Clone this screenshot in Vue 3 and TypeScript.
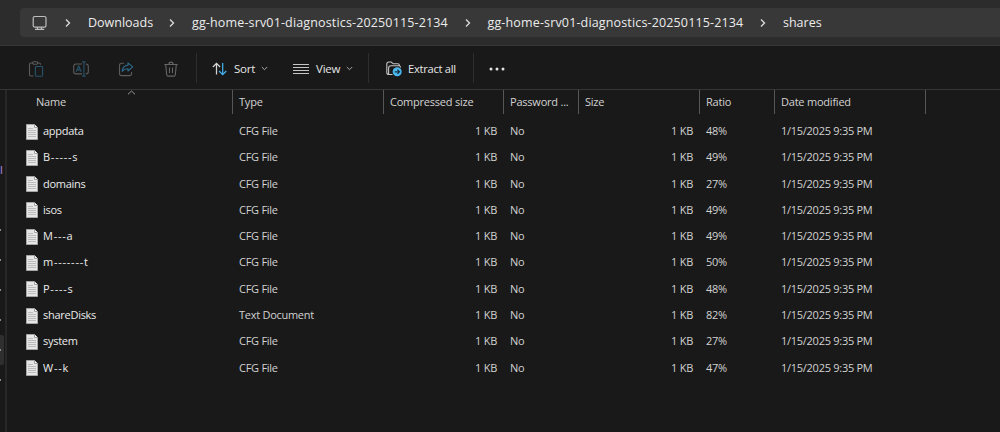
<template>
  <div class="explorer">
    <div class="address">
      <nav class="crumbs">
        <svg class="monitor" width="16" height="16" viewBox="0 0 16 16" fill="none">
          <rect x="1.200" y="1.500" width="12.800" height="10.600" rx="1.600" stroke="#bdbdbd" stroke-width="1.200" />
          <path d="M5.500 12v2.200M9.500 12v2.200M3 14.300h9.200" stroke="#bdbdbd" stroke-width="1.300" />
        </svg>
        <template v-for="(crumb, i) in crumbs" :key="i">
          <svg class="sep" width="6" height="10" viewBox="0 0 6 10" fill="none">
            <path d="M1 1.500 4.500 5 1 8.500" stroke="#d6d6d6" stroke-width="1.400" />
          </svg>
          <span class="crumb" :class="crumb.kind">{{ crumb.label }}</span>
        </template>
      </nav>
    </div>

    <div class="toolbar">
      <svg class="tool paste" width="16" height="16" viewBox="0 0 16 16" fill="none" stroke-width="1.1">
        <path d="M5 2H2.8C2 2 1.5 2.5 1.5 3.2v10.600c0 .7.5 1.200 1.300 1.200H5.500M9.500 2h1.800c.7 0 1.200.5 1.200 1.200v.6" stroke="#5c5c5c" />
        <rect x="4.6" y=".8" width="5.2" height="2.4" rx="1.2" stroke="#5c5c5c" />
        <rect x="7.4" y="5.5" width="7.2" height="9.7" rx=".9" stroke="#28536a" />
      </svg>
      <svg class="tool rename" width="16" height="16" viewBox="0 0 16 16" fill="none" stroke-width="1.1">
        <path d="M9 3H3C1.6 3 .7 3.9.7 5.2v5.5C.7 12 1.6 12.9 3 12.9h6M12.8 3c1.6 0 2.5.9 2.5 2.2v5.5c0 1.3-.9 2.2-2.5 2.2" stroke="#5c5c5c" />
        <path d="M3.2 10.8 5.7 5l2.5 5.8M4.1 8.900h3.200M10.900 1v14M9.200.9h3.400M9.200 15.100h3.400" stroke="#28536a" />
      </svg>
      <svg class="tool share" width="16" height="16" viewBox="0 0 16 16" fill="none" stroke-width="1.1">
        <path d="M6 2.2H3.7c-1.4 0-2.2.8-2.2 2.2v8c0 1.4.8 2.2 2.2 2.2h7.7c1.4 0 2.2-.8 2.2-2.2V11" stroke="#5c5c5c" />
        <path d="m10 1.8 4.7 4.1L10 10V7.8C7.200 7.600 5.700 8.600 4.200 10.400 4.500 6.700 6.500 4.500 10 4.100Z" stroke="#2c6a8c" stroke-linejoin="round" />
      </svg>
      <svg class="tool trash" width="16" height="16" viewBox="0 0 16 16" fill="none" stroke="#666" stroke-width="1.1">
        <path d="M1.300 3.500h13.400M5.900 3.300C5.900 1.900 6.700 1.100 8 1.100s2.100.8 2.100 2.200M2.700 3.700l1 10c.1.900.6 1.400 1.400 1.400h5.800c.8 0 1.300-.5 1.400-1.400l1-10M6.500 6.500v5.400M9.500 6.500v5.400" />
      </svg>
      <i class="rule" />
      <button class="command sort">
        <svg width="16" height="16" viewBox="0 0 16 16" fill="none" stroke-width="1.25">
          <path d="M4.500 13.500V2.600M.9 6l3.600-3.700L8.100 6" stroke="#d4d4d4" />
          <path d="M10.700 2v11.400M7.100 10l3.600 3.700L14.300 10" stroke="#43b1ec" />
        </svg>
        <span>Sort</span>
        <svg class="chevron" width="7" height="5" viewBox="0 0 7 5" fill="none">
          <path d="M.8 1 3.500 3.700 6.200 1" stroke="#aaa" />
        </svg>
      </button>
      <button class="command view">
        <svg width="16" height="12" viewBox="0 0 16 12" fill="none" stroke="#c6c6c6">
          <path d="M0 1.500h16M0 4.500h16M0 7.500h16M0 10.500h16" />
        </svg>
        <span>View</span>
        <svg class="chevron" width="7" height="5" viewBox="0 0 7 5" fill="none">
          <path d="M.8 1 3.500 3.700 6.200 1" stroke="#aaa" />
        </svg>
      </button>
      <i class="rule" />
      <button class="command extract">
        <svg width="16" height="16" viewBox="0 0 16 16" fill="none">
          <path d="M6.500 13.500H3C1.700 13.500.8 12.700.8 11.400V3.100C.8 1.800 1.600 1 2.900 1h2.300l2 1.800h4.300c1.200 0 2 .7 2 1.800M2.600 12.900V7.200c0-1.500.9-2.400 2.400-2.400h7.500c1.400 0 2.100.6 2.300 1.700" stroke="#c4c4c4" stroke-width="1.100" />
          <circle cx="11.200" cy="10.800" r="4.500" fill="#4cb8f0" />
          <path d="M8.700 10.800h4.600M11.400 8.700l2.100 2.100-2.100 2.100" stroke="#12303f" stroke-width="1.200" />
        </svg>
        <span>Extract all</span>
      </button>
      <i class="rule" />
      <svg class="more" width="16" height="4" viewBox="0 0 16 4" fill="#e4e4e4">
        <circle cx="2" cy="2" r="1.500" />
        <circle cx="8" cy="2" r="1.500" />
        <circle cx="14" cy="2" r="1.500" />
      </svg>
    </div>

    <div class="body">
      <aside class="tree">
        <span class="clipped">l</span>
        <ul class="ticks">
          <li v-for="n in 6" :key="n" :class="{ selected: n === 5 }" />
        </ul>
      </aside>
      <main class="list">
        <div class="grid head">
          <div v-for="col in columns" :key="col" class="cell">
            <span>{{ col }}</span>
            <svg v-if="col === 'Name'" class="ascending" width="9" height="5" viewBox="0 0 9 5" fill="none">
              <path d="M1 4.300 4.500 1 8 4.300" stroke="#999" />
            </svg>
          </div>
        </div>
        <div class="rows">
          <div v-for="file in files" :key="file.name" class="grid row">
            <div class="cell name">
              <svg width="12" height="16" viewBox="0 0 12 16">
                <path d="M.5.500h8l3 3v12H.500Z" fill="#e6e6e6" stroke="#a5a5a5" />
                <path d="M8.500.500v3h3" fill="#fff" stroke="#8c8c8c" stroke-width=".8" />
                <path d="M2 4.500h5M2 6.500h8M2 8.500h8M2 10.500h8M2 12.500h8" stroke="#aeb0b2" stroke-width=".8" />
              </svg>
              <span :class="{ masked: file.name.includes('-') }">{{ file.name }}</span>
            </div>
            <div class="cell">{{ file.type }}</div>
            <div class="cell size">1 KB</div>
            <div class="cell">No</div>
            <div class="cell size">1 KB</div>
            <div class="cell">{{ file.ratio }}%</div>
            <div class="cell date">1/15/2025 9:35 PM</div>
          </div>
        </div>
      </main>
    </div>
  </div>
</template>

<script setup lang="ts">
interface FileEntry {
  name: string;
  type: string;
  ratio: number;
}

const archive = 'gg-home-srv01-diagnostics-20250115-2134';
const crumbs = [
  { label: 'Downloads', kind: 'downloads' },
  { label: archive, kind: 'archive' },
  { label: archive, kind: 'archive' },
  { label: 'shares', kind: 'shares' },
];

const columns = ['Name', 'Type', 'Compressed size', 'Password ...', 'Size', 'Ratio', 'Date modified'];

const files: FileEntry[] = [
  { name: 'appdata', type: 'CFG File', ratio: 48 },
  { name: 'B-----s', type: 'CFG File', ratio: 49 },
  { name: 'domains', type: 'CFG File', ratio: 27 },
  { name: 'isos', type: 'CFG File', ratio: 49 },
  { name: 'M---a', type: 'CFG File', ratio: 49 },
  { name: 'm-------t', type: 'CFG File', ratio: 50 },
  { name: 'P----s', type: 'CFG File', ratio: 48 },
  { name: 'shareDisks', type: 'Text Document', ratio: 82 },
  { name: 'system', type: 'CFG File', ratio: 27 },
  { name: 'W--k', type: 'CFG File', ratio: 47 },
];
</script>

<style>
body {
  background: #191919;
}
</style>

<style scoped>
.explorer {
  display: flex;
  flex-direction: column;
  width: 1000px;
  height: 432px;
  overflow: hidden;
  box-sizing: border-box;
  background: #191919;
  color: #dedede;
  font-family: 'Open Sans', 'Noto Sans', sans-serif;
  font-size: 11px;
  white-space: nowrap;
}
svg {
  display: block;
  flex: none;
}
.address {
  box-sizing: border-box;
  flex: none;
  height: 46px;
  padding: 8px 0 0 20px;
  background: #2c2c2c;
  border-bottom: 1px solid #383838;
}
.crumbs {
  display: flex;
  align-items: center;
  height: 29px;
  padding-left: 12px;
  border-radius: 4px 0 0 4px;
  background: #383838;
  color: #ececec;
  font-size: 12.5px;
}
.monitor {
  margin-right: 17px;
}
.sep {
  margin-right: 17px;
}
.crumb {
  flex: none;
}
.downloads {
  width: 81px;
}
.archive {
  width: 272.5px;
  letter-spacing: 0.15px;
}
.toolbar {
  display: flex;
  align-items: center;
  flex: none;
  box-sizing: border-box;
  height: 44px;
  padding-left: 28px;
  border-bottom: 1px solid #363636;
}
.tool {
  margin-top: 2px;
  margin-right: 29px;
}
.trash {
  margin-right: 17px;
}
.rule {
  width: 1px;
  height: 30px;
  background: #2e2e2e;
}
.command {
  display: flex;
  align-items: center;
  box-sizing: border-box;
  padding: 2px 0 0;
  border: 0;
  background: none;
  color: #e6e6e6;
  font: inherit;
  font-size: 11.5px;
  letter-spacing: -0.2px;
}
.command span {
  margin-left: 7px;
}
.sort {
  width: 81px;
  margin-left: 15px;
}
.sort span {
  margin-left: 6px;
}
.view {
  width: 75px;
}
.chevron {
  margin-left: 6px;
}
.extract {
  width: 87px;
  margin-left: 17px;
  font-size: 11.2px;
  letter-spacing: -0.28px;
}
.extract span {
  margin-left: 6px;
}
.more {
  margin: 2px 0 0 15px;
}
.body {
  display: flex;
  flex: 1;
}
.tree {
  width: 5px;
  flex: none;
  overflow: hidden;
  border-right: 2px solid #272727;
}
.clipped {
  display: block;
  height: 16px;
  margin-top: 72px;
  line-height: 16px;
  color: #b68ae8;
}
.ticks {
  margin: 37px 0 0;
  padding: 0;
  list-style: none;
}
.ticks li {
  display: flex;
  align-items: center;
  height: 30px;
  width: 4px;
  border-radius: 0 2px 2px 0;
}
.ticks li::before {
  content: '';
  width: 1px;
  height: 2px;
  background: #8a8a8a;
}
.ticks .selected {
  background: #2f2f2f;
}
.list {
  flex: 1;
}
.grid {
  display: grid;
  grid-template-columns: 226px 151px 120px 75px 121px 75px 151px;
}
.cell {
  box-sizing: border-box;
  padding-left: 6px;
}
.head .cell {
  position: relative;
  height: 24px;
  line-height: 23px;
  border-right: 1px solid #565656;
  color: #d2d2d2;
  letter-spacing: -0.22px;
}
.head .cell:first-child {
  padding-left: 29px;
}
.ascending {
  position: absolute;
  top: 0;
  left: 120px;
}
.rows {
  padding-top: 4px;
}
.row {
  height: 26.3px;
  line-height: 25px;
  color: #d2d2d2;
  letter-spacing: -0.27px;
}
.row .name {
  display: flex;
  align-items: center;
  gap: 5px;
  height: 26px;
  padding-left: 19px;
  color: #ebebeb;
}
.row .name svg {
  margin-top: 1px;
}
.row .name span {
  height: 26px;
}
.row .name .masked {
  letter-spacing: 0.75px;
}
.row .size {
  padding: 0 7px 0 0;
  text-align: right;
}
</style>
